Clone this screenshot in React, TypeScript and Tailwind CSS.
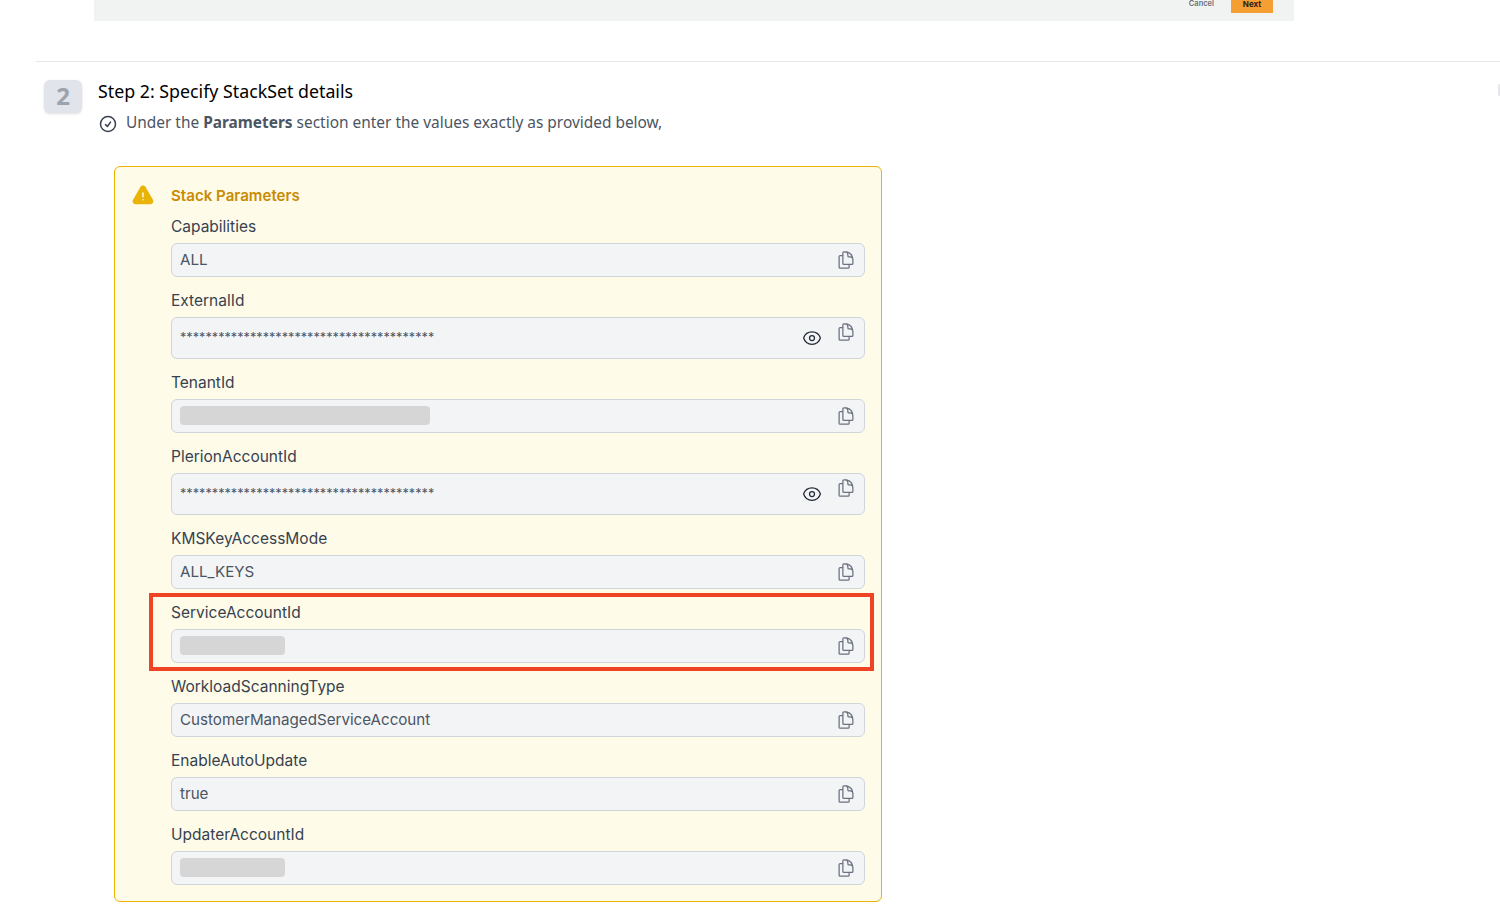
import { HiExclamationTriangle, HiOutlineCheckCircle, HiOutlineDocumentDuplicate, HiOutlineEye } from "react-icons/hi2";

const stars = "*".repeat(40);

const params = [
  { label: "Capabilities", value: "ALL" },
  { label: "ExternalId", secret: true },
  { label: "TenantId", mask: "w-[250px]" },
  { label: "PlerionAccountId", secret: true },
  { label: "KMSKeyAccessMode", value: "ALL_KEYS" },
  { label: "ServiceAccountId", mask: "w-[105px]" },
  { label: "WorkloadScanningType", value: "CustomerManagedServiceAccount" },
  { label: "EnableAutoUpdate", value: "true" },
  { label: "UpdaterAccountId", mask: "w-[105px]" },
];

type Param = { label: string; value?: string; secret?: boolean; mask?: string };

const Field = ({ label, value, secret, mask }: Param) => {
  return (
    <div>
      <div className="text-[15.5px] leading-6 text-[#374151] mb-1">{label}</div>
      {secret ? (
        <div className="h-[42px] bg-[#f3f4f6] border border-[#d1d5db] rounded-md pl-2 pr-2 flex items-start justify-between">
          <span className="mt-[10px] text-[12.7px] leading-5 text-[#4b5563]">{stars}</span>
          <div className="flex items-start gap-[14px] mt-1">
            <HiOutlineEye className="w-5 h-5 mt-[6px] text-[#1f2937]" />
            <HiOutlineDocumentDuplicate className="w-5 h-5 text-[#6b7280]" />
          </div>
        </div>
      ) : (
        <div className="h-[34px] bg-[#f3f4f6] border border-[#d1d5db] rounded-md pl-2 pr-2 flex items-center justify-between">
          {mask ? (
            <div className={`h-[19px] mb-[2px] bg-[#d6d6d6] rounded-sm ${mask}`} />
          ) : (
            <span className="text-[15.15px] text-[#4b5563]">{value}</span>
          )}
          <HiOutlineDocumentDuplicate className="w-5 h-5 text-[#6b7280]" />
        </div>
      )}
    </div>
  );
};

export default function App() {
  return (
    <div className="relative w-[1500px] h-[904px] overflow-hidden bg-white font-['Inter',sans-serif]">
      <div className="ml-[94px] w-[1200px] h-[21px] bg-[#f1f3f3] flex justify-end pr-[21px] items-start">
        <span className="text-[7.5px] leading-[8px] font-semibold text-[#6b6f73] mr-[17px]">Cancel</span>
        <div className="w-[42px] h-[13px] bg-[#f59e33] text-[8px] leading-[8px] font-bold text-[#2b2118] text-center">Next</div>
      </div>

      <div className="ml-[36px] mt-[40px] border-t border-[#e5e7eb] pt-[18px] pl-[8px] flex font-['Noto_Sans',sans-serif]">
        <div className="w-[38px] h-[33px] rounded-md bg-[#e1e4ea] shadow-sm flex items-center justify-center text-2xl leading-[31px] pb-[2px] font-bold text-[#9ca3af] shrink-0">
          2
        </div>
        <div className="ml-[16px]">
          <div className="text-[17.8px] leading-[22px] text-black">Step 2: Specify StackSet details</div>
          <div className="mt-[9px] flex items-start text-[15.43px] leading-5 text-[#4b5563]">
            <HiOutlineCheckCircle className="w-[20px] h-[20px] text-[#374151] mr-[8px] mt-[3px] stroke-[1.8]" />
            <span className="mt-[2px]">
              Under the <b className="font-bold">Parameters</b> section enter the values exactly as provided below,
            </span>
          </div>
        </div>
      </div>

      <div className="ml-[114px] mt-[32px] w-[768px] h-[736px] border border-[#eab308] bg-[#fefce8] rounded-md pt-[17px] pr-4 pl-4 flex font-['Inter',sans-serif]">
        <HiExclamationTriangle className="w-6 h-6 text-[#eab308] shrink-0 mr-4" />
        <div className="flex-1 min-w-0">
          <div className="text-[15.1px] leading-6 font-semibold text-[#ca8a04] mb-[7px]">Stack Parameters</div>
          <div className="flex flex-col gap-3">
            {params.map((p) => (
              <Field key={p.label} {...p} />
            ))}
          </div>
        </div>
      </div>

      {/* red highlight drawn over the field */}
      <div className="absolute left-[149px] top-[593px] w-[725px] h-[78px] border-4 border-[#ef4423]" />
      <div className="absolute left-[1498px] top-[84px] w-[2px] h-[12px] rounded-l bg-[#e5e7eb]" />
    </div>
  );
}
